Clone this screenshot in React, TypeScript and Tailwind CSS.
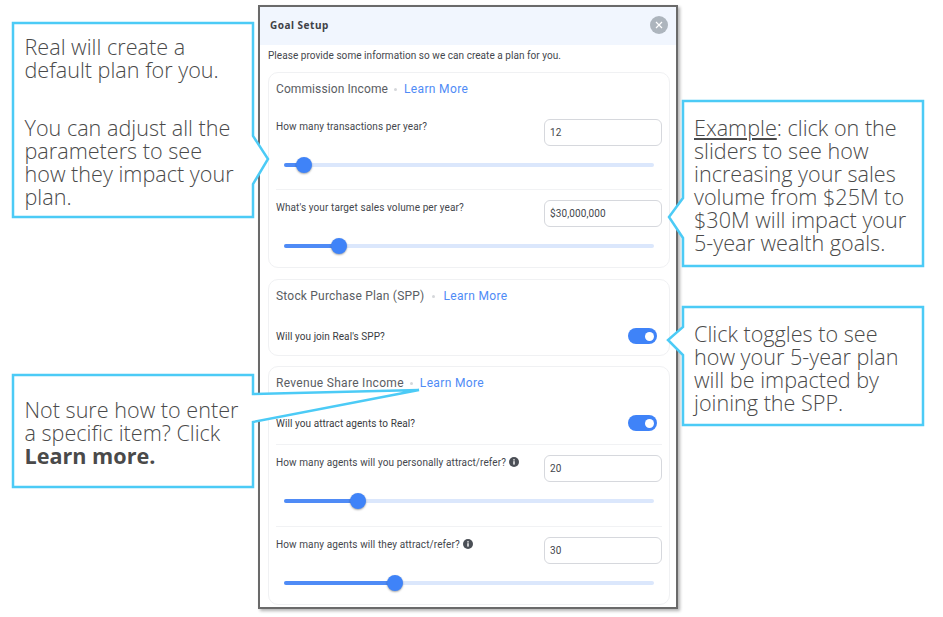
import React from "react";

const din = "font-['Roboto',sans-serif]";

function Slider({ pct }: { pct: number }) {
  return (
    <div className="relative mx-2 h-1 rounded-full bg-[#dbe7fc]">
      <div className="h-1 rounded-full bg-[#4f8bf6]" style={{ width: `${pct}%` }} />
      <div
        className="absolute top-1/2 h-4 w-4 -translate-x-1/2 -translate-y-1/2 rounded-full bg-[#3f83f8] shadow-[0_1px_2px_rgba(0,0,0,0.35)]"
        style={{ left: `${pct}%` }}
      />
    </div>
  );
}

function Toggle() {
  return (
    <div className="mr-[5px] flex h-4 w-[29px] items-center justify-end rounded-full bg-[#3f83f8] pr-[3px]">
      <div className="h-[9px] w-[9px] rounded-full bg-white" />
    </div>
  );
}

function Info() {
  return (
    <svg width="10" height="10" viewBox="0 0 10 10" className="ml-[3px] inline-block align-[-1px]">
      <circle cx="5" cy="5" r="5" fill="#4b4f56" />
      <rect x="4.3" y="4.2" width="1.4" height="3.4" fill="#fff" />
      <rect x="4.3" y="2.2" width="1.4" height="1.3" fill="#fff" />
    </svg>
  );
}

function Field({ label, value, info, top }: { label: string; value: string; info?: boolean; top: string }) {
  return (
    <div className={top}>
      <div className="flex items-start justify-between">
        <div className="pt-px text-[10px] leading-[14px] tracking-[0.1px] text-[#44474d]">
          {label}
          {info && <Info />}
        </div>
        <div className="flex h-[27px] w-[118px] items-center rounded-[6px] border border-[#d6d8dd] pl-[5px] text-[10px] tracking-[0.1px] text-[#44474d]">
          {value}
        </div>
      </div>
    </div>
  );
}

function CardTitle({ title, gap, track }: { title: string; gap: string; track: string }) {
  return (
    <div className="flex items-center text-[12px] leading-[16px] text-[#5a5d63]">
      <span className={track}>{title}</span>
      <span className={`h-[3px] w-[3px] rounded-full bg-[#d5d7da] ${gap}`} />
      <span className="tracking-[0.35px] text-[#4f8bf6]">Learn More</span>
    </div>
  );
}

const divider = "border-t border-[#f1f2f4]";
const card = "rounded-[10px] border border-[#f0f1f3] px-[7px]";
const calloutText = "absolute font-['Open_Sans',sans-serif] font-light text-[21.6px] leading-[23px] text-[#4a4a4a]";

export default function App() {
  return (
    <div className="relative h-[617px] w-[943px] overflow-hidden bg-white">
      <div className="pl-[258px] pt-[5px]">
        <div className={`h-[604px] w-[420px] border-2 border-[#6a6a6a] bg-white shadow-[2px_2px_3px_rgba(0,0,0,0.3)] ${din}`}>
          <div className="flex h-[38px] items-center justify-between bg-[#f1f6fe] pb-[2px] pl-[10px] pr-[8px]">
            <span className="font-['Noto_Sans',sans-serif] text-[10px] font-bold tracking-[0.5px] text-[#3f4246]">Goal Setup</span>
            <div className="flex h-[18px] w-[18px] items-center justify-center rounded-full bg-[#adb5bd]">
              <svg width="8" height="8" viewBox="0 0 8 8">
                <path d="M1 1L7 7M7 1L1 7" stroke="#fff" strokeWidth="1.2" />
              </svg>
            </div>
          </div>
          <div className="pl-[8px] pr-[6px]">
            <div className="pt-[4px] text-[10px] leading-[14px] tracking-[0.05px] text-[#44474d]">
              Please provide some information so we can create a plan for you.
            </div>
            <div className={`mt-[9px] h-[196px] ${card}`}>
              <div className="pt-[8px]">
                <CardTitle title="Commission Income" gap="mx-[6.5px]" track="tracking-[0.1px]" />
              </div>
              <Field top="mt-[22px]" label="How many transactions per year?" value="12" />
              <div className="mt-[17px]">
                <Slider pct={5.4} />
              </div>
              <div className={`mt-[22px] ${divider}`} />
              <Field top="mt-[10px]" label="What's your target sales volume per year?" value="$30,000,000" />
              <div className="mt-[17px]">
                <Slider pct={14.9} />
              </div>
            </div>
            <div className={`mt-[11px] h-[77px] ${card}`}>
              <div className="pt-[8px]">
                <CardTitle title="Stock Purchase Plan (SPP)" gap="mx-[8px]" track="tracking-[0.2px]" />
              </div>
              <div className="mt-[24px] flex items-center justify-between text-[10px] tracking-[0.07px] text-[#3a3c41]">
                <span>Will you join Real's SPP?</span>
                <Toggle />
              </div>
            </div>
            <div className={`mt-[10px] h-[239px] ${card}`}>
              <div className="pt-[8px]">
                <CardTitle title="Revenue Share Income" gap="mx-[6.5px]" track="tracking-[0.3px]" />
              </div>
              <div className="mt-[24px] flex items-center justify-between text-[10px] tracking-[0.07px] text-[#3a3c41]">
                <span>Will you attract agents to Real?</span>
                <Toggle />
              </div>
              <div className={`mt-[13px] ${divider}`} />
              <Field top="mt-[10px]" label="How many agents will you personally attract/refer?" value="20" info />
              <div className="mt-[17px]">
                <Slider pct={20} />
              </div>
              <div className={`mt-[23px] ${divider}`} />
              <Field top="mt-[10px]" label="How many agents will they attract/refer?" value="30" info />
              <div className="mt-[17px]">
                <Slider pct={30} />
              </div>
            </div>
          </div>
        </div>
      </div>

      <svg className="absolute inset-0" width="943" height="617" fill="#fff" stroke="#4ccbf6" strokeWidth="2.5">
        <path d="M13 23H253V136L268 159L253 184V217H13Z" />
        <path d="M683 101H923V266H683V238L669 217L683 198Z" />
        <path d="M683 307H923V425H683V355L668 340L683 327Z" />
        <path d="M13 375H253V394L419 390L253 422V487H13Z" />
      </svg>

      <div className={`${calloutText} left-[24.5px] top-[35px] w-[225px]`}>
        <p>Real will create a<br />default plan for you.</p>
        <p className="mt-[35px]">You can adjust all the<br />parameters to see<br />how they impact your<br />plan.</p>
      </div>
      <div className={`${calloutText} left-[694px] top-[116px] w-[225px]`}>
        <span className="underline">Example</span>: click on the<br />sliders to see how<br />increasing your sales<br />volume from $25M to<br />$30M will impact your<br />5-year wealth goals.
      </div>
      <div className={`${calloutText} left-[694px] top-[322px] w-[225px]`}>
        Click toggles to see<br />how your 5-year plan<br />will be impacted by<br />joining the SPP.
      </div>
      <div className={`${calloutText} left-[24.5px] top-[398px] w-[225px]`}>
        Not sure how to enter<br />a specific item? Click<br /><b className="font-bold">Learn more.</b>
      </div>
    </div>
  );
}
